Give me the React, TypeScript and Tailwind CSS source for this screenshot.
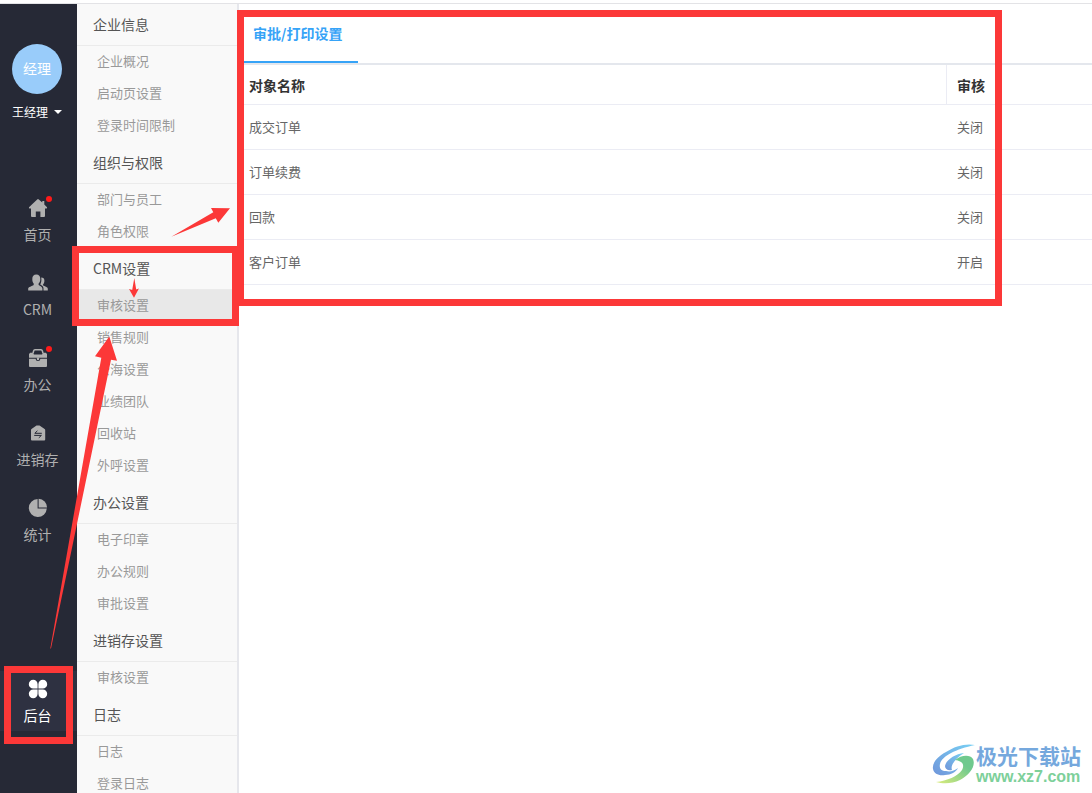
import { useState } from 'react';
import type { ReactNode } from 'react';

import clsx from 'clsx';

type NavItem = {
    label: string;
    icon: ReactNode;
    hasBadge?: boolean;
};

type MenuItem = {
    id: string;
    label: string;
};

type MenuGroup = {
    title: string;
    items: MenuItem[];
};

const HomeIcon = () => (
    <svg viewBox="0 0 20 20" className="size-5" fill="currentColor" aria-hidden="true">
        <path d="M10 1q.4 0 .8.400L14.300 4.600V3h2v3.400L19 9.300q.5 1.200-.8 1.200H17v7.500q0 1-1 1h-3.600v-5.500H7.800V19H4q-1 0-1-1v-7.500H1.800Q.5 10.500 1 9.300L9.200 1.400Q9.600 1 10 1z" />
    </svg>
);

const PeopleIcon = () => (
    <svg viewBox="0 0 20 20" className="size-5" fill="currentColor" aria-hidden="true">
        <path d="M8.300 1.600c2.600 0 4 1.800 4 4.300 0 2-.7 3.700-1.700 4.700V12c1.600 1 3.800 1.800 3.800 3.600v2H.2v-2C.2 14 4 13.200 5.700 12v-1.400C4.800 9.600 4.300 7.900 4.300 5.900c0-2.500 1.400-4.300 4-4.300z" />
        <path d="M13.200 4.500c2.200 0 3.200 1.200 3.200 3.200 0 1.600-.5 2.800-1.300 3.600v1.200c1.600.8 4.700 1.500 4.700 3.200v1.900h-4.300v-2.200c0-1.900-1.600-2.900-3.300-3.800 1.100-1.900 1.500-4.400 1-7.100z" />
    </svg>
);

const CaseIcon = () => (
    <svg viewBox="0 0 20 20" className="size-5" aria-hidden="true">
        <path d="M5 5.500 5.600 3Q5.900 1.700 7 1.700h6q1.100 0 1.400 1.300L15 5.500" fill="none" stroke="currentColor" strokeWidth="1.500" />
        <path d="M2.200 4.800h2.400L6 6.500h8l1.400-1.700h2.400L19 6v3.700H1V6z" fill="currentColor" />
        <path d="M1 10.700h6.600a2.400 2.400 0 0 0 4.800 0H19V18q0 1-1 1H2q-1 0-1-1z" fill="currentColor" />
        <path d="M8.800 9.600h2.400v1.300a1.200 1.200 0 0 1-2.400 0z" fill="currentColor" />
    </svg>
);

const StockIcon = () => (
    <svg viewBox="0 0 20 20" className="size-5" aria-hidden="true">
        <path d="M8.500 2.600h3L16.600 6q.6.400.6 1v9.500q0 1-1 1H4q-1 0-1-1V7q0-.6.500-1z" fill="currentColor" />
        <path d="M13.800 10.300H6.800l2.600-2.500M6.200 12.400h7.200l-2.600 2.400" fill="none" stroke="#262936" strokeWidth="1" />
    </svg>
);

const PieIcon = () => (
    <svg viewBox="0 0 20 20" className="size-5" fill="currentColor" aria-hidden="true">
        <path d="M9.600 1a9 9 0 1 0 9.200 9.500H9.600z" />
        <path d="M10.600.8v8.700h8.500A8.700 8.700 0 0 0 10.600.8z" />
    </svg>
);

const CloverIcon = () => (
    <svg viewBox="0 0 20 20" className="size-5" fill="currentColor" aria-hidden="true">
        <path d="M5.200.8a4.400 4.400 0 0 1 4.400 4.400v4.400H5.200a4.400 4.400 0 0 1 0-8.800z" />
        <path d="M14.800.8a4.400 4.400 0 0 0-4.400 4.400v4.400h4.400a4.400 4.400 0 0 0 0-8.800z" />
        <path d="M5.200 19.200a4.400 4.400 0 0 0 4.400-4.400v-4.400H5.200a4.400 4.400 0 0 0 0 8.800z" />
        <path d="M14.800 19.200a4.400 4.400 0 0 1-4.400-4.400v-4.400h4.400a4.400 4.400 0 0 1 0 8.800z" />
    </svg>
);

const NAV_ITEMS: NavItem[] = [
    { label: '首页', icon: <HomeIcon />, hasBadge: true },
    { label: 'CRM', icon: <PeopleIcon /> },
    { label: '办公', icon: <CaseIcon />, hasBadge: true },
    { label: '进销存', icon: <StockIcon /> },
    { label: '统计', icon: <PieIcon /> },
];

const MENU_GROUPS: MenuGroup[] = [
    {
        title: '企业信息',
        items: [
            { id: 'profile', label: '企业概况' },
            { id: 'splash', label: '启动页设置' },
            { id: 'login-time', label: '登录时间限制' },
        ],
    },
    {
        title: '组织与权限',
        items: [
            { id: 'staff', label: '部门与员工' },
            { id: 'roles', label: '角色权限' },
        ],
    },
    {
        title: 'CRM设置',
        items: [
            { id: 'crm-audit', label: '审核设置' },
            { id: 'sales-rules', label: '销售规则' },
            { id: 'public-pool', label: '公海设置' },
            { id: 'teams', label: '业绩团队' },
            { id: 'recycle', label: '回收站' },
            { id: 'calls', label: '外呼设置' },
        ],
    },
    {
        title: '办公设置',
        items: [
            { id: 'seal', label: '电子印章' },
            { id: 'office-rules', label: '办公规则' },
            { id: 'approval', label: '审批设置' },
        ],
    },
    { title: '进销存设置', items: [{ id: 'stock-audit', label: '审核设置' }] },
    {
        title: '日志',
        items: [
            { id: 'logs', label: '日志' },
            { id: 'login-logs', label: '登录日志' },
        ],
    },
];

const ROWS = [
    { name: '成交订单', status: '关闭' },
    { name: '订单续费', status: '关闭' },
    { name: '回款', status: '关闭' },
    { name: '客户订单', status: '开启' },
];

const NavLink = ({ item, active }: { item: NavItem; active?: boolean }) => (
    <a
        href="#"
        className={clsx('flex h-15 flex-col items-center pt-2 pr-0.5 text-sm', active ? 'bg-[#2e3141] text-white' : 'text-[#b0b0b0]')}
    >
        <span className="relative">
            {item.icon}
            {item.hasBadge && <span className="absolute -top-0.5 -right-1 size-1.5 rounded-full bg-[#ff1a1a]" />}
        </span>
        <span className="mt-1.5 leading-5">{item.label}</span>
    </a>
);

const Sidebar = () => (
    <aside className="flex w-[77px] shrink-0 flex-col bg-[#262936] pt-10 pb-[62px]">
        <div className="flex flex-col items-center pr-[3px]">
            <div className="flex size-[50px] items-center justify-center rounded-full bg-[#99ccfa] pb-0.5 text-sm text-white">经理</div>
            <button type="button" className="mt-2 flex items-center gap-1.5 text-xs leading-5 text-white">
                王经理
                <svg viewBox="0 0 8 4" className="h-1 w-2" fill="currentColor" aria-hidden="true">
                    <path d="M0 0h8L4 4z" />
                </svg>
            </button>
        </div>
        <nav className="mt-[68px] flex flex-col gap-[15px]">
            {NAV_ITEMS.map((item) => (
                <NavLink key={item.label} item={item} />
            ))}
        </nav>
        <div className="mt-auto">
            <NavLink item={{ label: '后台', icon: <CloverIcon /> }} active />
        </div>
    </aside>
);

const SettingsMenu = () => {
    const [activeId, setActiveId] = useState('crm-audit');

    return (
        <nav className="w-[162px] shrink-0 overflow-hidden border-r-2 border-[#e6e7ec] bg-[#f9f9f9]">
            {MENU_GROUPS.map((group) => (
                <section key={group.title}>
                    <h2 className="h-[42px] border-b border-[#ebebeb] pl-4 text-sm leading-10 text-[#555]">{group.title}</h2>
                    {group.items.map((item) => (
                        <a
                            key={item.id}
                            href="#"
                            onClick={() => setActiveId(item.id)}
                            className={clsx('block h-8 pl-5 text-[13px] leading-[30px] text-[#999]', activeId === item.id && 'bg-[#e8e8e8]')}
                        >
                            {item.label}
                        </a>
                    ))}
                </section>
            ))}
        </nav>
    );
};

const AuditTable = () => (
    <table className="w-full table-fixed border-separate border-spacing-0 text-left">
        <thead>
            <tr className="h-10 text-sm text-[#333]">
                <th className="w-[83%] border-r border-b border-[#ebecf4] px-2.5 font-bold">对象名称</th>
                <th className="border-b border-[#ebecf4] px-2.5 font-bold">审核</th>
            </tr>
        </thead>
        <tbody>
            {ROWS.map((row) => (
                <tr key={row.name} className="h-[45px] text-[13px] text-[#666]">
                    <td className="border-b border-[#ebecf4] px-2.5">{row.name}</td>
                    <td className="border-b border-[#ebecf4] px-2.5">{row.status}</td>
                </tr>
            ))}
        </tbody>
    </table>
);

// Red frames and arrows that walk the reader through the steps
const GuideMarks = () => (
    <svg width="1092" height="793" className="pointer-events-none absolute top-0 left-0" fill="#fc3838" aria-hidden="true">
        <g fill="none" stroke="#fc3838" strokeWidth="7">
            <rect x="240.5" y="13.5" width="758" height="289" />
            <rect x="75.5" y="249.5" width="160" height="73" />
            <rect x="7.5" y="669.5" width="62" height="71" />
        </g>
        <path d="M171.300 236.700 213.300 212.300 211 208 230 208.300 218.300 222.700 215.800 218.200z" />
        <path d="M134.300 278 136.200 289.500 138.900 288.500 134 297.700 129 289 132.200 290z" />
        <path d="M50.300 648.500 101.300 357.700 95 356.200 109.300 336.500 117 360.700 111 359.700 69.500 560 51 648.500z" />
    </svg>
);

const Watermark = () => (
    <div className="absolute right-[11px] bottom-1.5 flex items-center">
        <svg viewBox="0 0 44 44" className="size-11" aria-hidden="true">
            <defs>
                <linearGradient id="swirl-blue" x1="1" y1="0" x2="0" y2="1">
                    <stop offset="0" stopColor="#78d0f4" />
                    <stop offset="1" stopColor="#7096da" />
                </linearGradient>
                <linearGradient id="swirl-green" x1="1" y1="0" x2="0" y2="1">
                    <stop offset=".3" stopColor="#6fc98e" />
                    <stop offset="1" stopColor="#dcec7c" />
                </linearGradient>
            </defs>
            <path
                d="M43 2C34 0 23 3 14 9 5 14 0 20 1 26c1 5 6 7 12 6 6 0 11-3 13-7-4 3-8 4-12 3-5 0-7-3-6-7C10 13 24 6 43 2z"
                fill="url(#swirl-blue)"
            />
            <path d="M32 10c-9 1-18 7-19 13 0 3 3 5 7 4-2-5 4-12 12-17z" fill="url(#swirl-blue)" />
            <path d="M23 17c6-5 15-6 18-1 3 7-3 16-13 21-8 4-17 4-24 2 11-1 22-6 26-12 3-6 0-9-7-10z" fill="url(#swirl-green)" />
        </svg>
        <div className="flex flex-col">
            <span className="text-[21px] leading-6 font-bold text-[#75a8dd]">极光下载站</span>
            <span className="font-['Liberation_Sans',sans-serif] text-base leading-5 font-bold text-[#7dd09a]">www.xz7.com</span>
        </div>
    </div>
);

const App = () => (
    <div className="relative flex h-screen flex-col overflow-hidden bg-white pt-[3px] font-['Noto_Sans_CJK_SC',sans-serif]">
        <div className="flex min-h-0 flex-1 border-t border-[#e3e3e6]">
            <Sidebar />
            <SettingsMenu />
            <main className="min-w-0 flex-1">
                <div className="flex h-[61px] border-b-2 border-[#e4e7ed]" role="tablist">
                    <button
                        type="button"
                        role="tab"
                        aria-selected="true"
                        className="border-b-2 border-[#36a3f7] pr-4 pl-3.5 text-sm leading-5 font-bold text-[#36a3f7]"
                    >
                        审批/打印设置
                    </button>
                </div>
                <AuditTable />
            </main>
        </div>
        <GuideMarks />
        <Watermark />
    </div>
);

export default App;
